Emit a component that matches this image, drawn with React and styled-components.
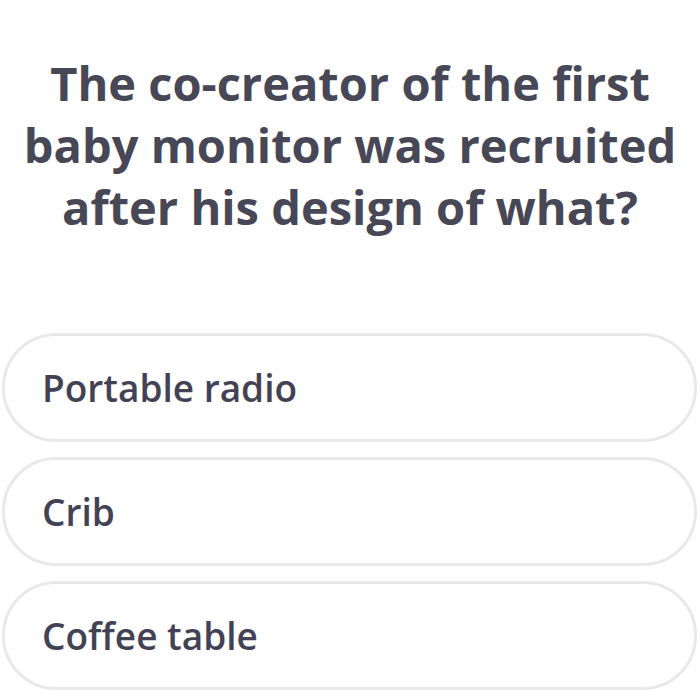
import React from "react";
import styled, { createGlobalStyle } from "styled-components";

const Global = createGlobalStyle`
  html, body { margin: 0; padding: 0; background: #ffffff; }
  body { font-family: "Open Sans", sans-serif; }
`;

const Page = styled.div`
  width: 700px;
  height: 700px;
  overflow: hidden;
  display: flex;
  flex-direction: column;
  background: #fff;
`;

const Question = styled.h1`
  margin: 52px 0 0 0;
  padding: 0;
  text-align: center;
  font-family: "Open Sans", sans-serif;
  font-weight: 700;
  font-size: 47px;
  line-height: 62px;
  color: #474756;
`;

const Options = styled.div`
  margin: 95px 0 0 2px;
  width: 695px;
  display: flex;
  flex-direction: column;
  gap: 15px;
`;

const Option = styled.div`
  box-sizing: border-box;
  height: 109px;
  border: 3px solid #e9e9eb;
  border-radius: 54px;
  display: flex;
  align-items: center;
  padding-left: 37px;
  font-family: "Open Sans", sans-serif;
  font-weight: 600;
  font-size: 37px;
  color: #434254;
`;

const answers = ["Portable radio", "Crib", "Coffee table"];

export default function App() {
  return (
    <Page>
      <Global />
      <Question>
        The co-creator of the first
        <br />
        baby monitor was recruited
        <br />
        after his design of what?
      </Question>
      <Options>
        {answers.map((a) => (
          <Option key={a}>{a}</Option>
        ))}
      </Options>
    </Page>
  );
}
